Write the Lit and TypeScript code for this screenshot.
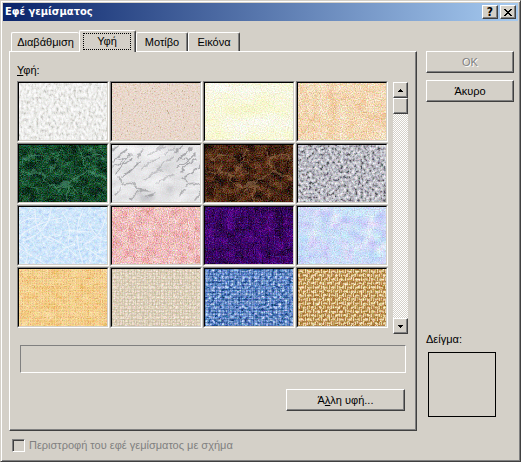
import { LitElement, html, svg, css, nothing } from "lit";
import { customElement, property, state } from "lit/decorators.js";
import { classMap } from "lit/directives/class-map.js";

interface Texture {
  name: string;
  ramp: string[];
  freq: string;
  octaves: number;
  contrast: number;
  chroma: number;
  grain?: number;
  marks?: "marble" | "veins" | "fibres" | "weave" | "specks" | "basket";
  mark?: string;
}

const TEXTURES: Texture[] = [
  { name: "Ανακυκλωμένο χαρτί", ramp: ["#c0c0bc", "#dededa", "#eeeeec", "#f8f8f8", "#ffffff"], freq: "0.4 0.28", octaves: 3, contrast: 1.5, chroma: 0.1, grain: 0.03 },
  { name: "Ροζ χαρτί", ramp: ["#cdb8a0", "#e8d2c2", "#e8d8cc", "#ecdcd2", "#e8e0d8"], freq: "0.6", octaves: 2, contrast: 1.6, chroma: 0.5, grain: 0.09, marks: "specks", mark: "#a09068" },
  { name: "Περγαμηνή", ramp: ["#f4f4c8", "#f8f8d2", "#f8f8dc", "#f8f8e6", "#fcfcf4"], freq: "0.04 0.06", octaves: 2, contrast: 1.5, chroma: 0.1, grain: 0.14 },
  { name: "Χαρτοσακούλα", ramp: ["#eec090", "#f0cca4", "#f4d8b4", "#f4dec0", "#fae8cc"], freq: "0.1", octaves: 3, contrast: 1.2, chroma: 0.05, grain: 0.22 },
  { name: "Πράσινο μάρμαρο", ramp: ["#062014", "#0a2e1c", "#144628", "#205c3a", "#408060"], freq: "0.1 0.12", octaves: 4, contrast: 1.4, chroma: 0.05, grain: 0.26, marks: "veins", mark: "#4f9874" },
  { name: "Λευκό μάρμαρο", ramp: ["#c8c8cc", "#dcdcde", "#e6e6e8", "#eeeef0", "#f8f8f8"], freq: "0.04 0.07", octaves: 3, contrast: 1.4, chroma: 0, grain: 0.05, marks: "marble", mark: "#77777b" },
  { name: "Καφέ μάρμαρο", ramp: ["#201008", "#30180c", "#4a2812", "#60361c", "#805438"], freq: "0.1 0.12", octaves: 4, contrast: 1.4, chroma: 0.05, grain: 0.26, marks: "veins", mark: "#9c7450" },
  { name: "Γρανίτης", ramp: ["#505058", "#9898a0", "#bcbcc6", "#d4d4da", "#f0f0f4"], freq: "0.35", octaves: 3, contrast: 1.8, chroma: 0.12, grain: 0.1 },
  { name: "Μπλε χαρτομάντιλο", ramp: ["#b4d0fa", "#c4e0fa", "#d0e6fc", "#d8ecfe", "#eaf4ff"], freq: "0.3", octaves: 3, contrast: 1.6, chroma: 0.4, grain: 0.09, marks: "fibres", mark: "#f4f8fc" },
  { name: "Ροζ χαρτομάντιλο", ramp: ["#e49c9c", "#eaacac", "#f0bcbc", "#f2c8c4", "#f6d8d0"], freq: "0.12", octaves: 3, contrast: 1.2, chroma: 0.1, grain: 0.26 },
  { name: "Μωβ πλέγμα", ramp: ["#200034", "#2e004c", "#3c0068", "#4c007c", "#680c98"], freq: "0.1", octaves: 3, contrast: 1.5, chroma: 0.1, grain: 0.28 },
  { name: "Μπουκέτο", ramp: ["#b8c8f8", "#c4d4fc", "#ccdcfc", "#d4e4fc", "#e4f0ff"], freq: "0.09", octaves: 4, contrast: 1.4, chroma: 1.1, grain: 0.16 },
  { name: "Πάπυρος", ramp: ["#e8b464", "#f0c078", "#f0c888", "#f4d094", "#f8dca4"], freq: "0.12", octaves: 3, contrast: 1.2, chroma: 0.2, grain: 0.18, marks: "weave", mark: "#ffe8a0" },
  { name: "Καμβάς", ramp: ["#ccc0a8", "#dcd0b8", "#e6d8c4", "#ecdece", "#f4e8d8"], freq: "0.5", octaves: 2, contrast: 1.8, chroma: 0.2, grain: 0.13, marks: "weave", mark: "#b4ab91" },
  { name: "Τζιν", ramp: ["#1c4480", "#4874b8", "#7498d4", "#98b4e4", "#cce0fc"], freq: "0.3 0.4", octaves: 2, contrast: 1.9, chroma: 0.15, grain: 0.2, marks: "weave", mark: "#184484" },
  { name: "Ψάθα", ramp: ["#a07034", "#b88c4c", "#d0ac70", "#e4c898", "#f8ecc8"], freq: "0.4", octaves: 2, contrast: 1.7, chroma: 0.15, grain: 0.2, marks: "basket", mark: "#94601c" },
];

const channel = (ramp: string[], at: number) =>
  ramp.map((c) => (parseInt(c.slice(at, at + 2), 16) / 255).toFixed(3)).join(" ");

@customElement("texture-swatch")
class TextureSwatch extends LitElement {
  static styles = css`
    :host { display: block; height: 57px; overflow: hidden; }
    .art { display: block; width: 100%; height: 100%; }
  `;

  @property({ attribute: false }) texture!: Texture;
  @property({ type: Number }) seed = 1;

  private marks(t: Texture) {
    const c = t.mark;
    switch (t.marks) {
      case "marble":
        return svg`<g fill="none" stroke=${c} stroke-linecap="round" filter="url(#soften)">
          <g id="streaks">
            <path d="M1 17 8 9 16 4M0 22Q9 19 19 9M4 28 11 19 20 14M9 32Q20 26 27 17M-2 7 6 1M7 14 12 13" stroke-width="1.6" opacity=".55"/>
            <path d="M36 10Q44 7 50 0M44 6 52 2M29 26 37 18 48 12M44 27 51 18 62 12M53 9 63 3M33 35 40 29 50 25M45 38 53 33 63 29" stroke-width="1.6" opacity=".32"/>
            <path d="M10 40Q19 36 24 41T37 46M6 33 12 37M19 55 25 47 32 45M34 51 42 49M31 5 26 12M3 50 8 45" stroke-width="1.6" opacity=".48"/>
          </g>
          <use href="#streaks" x="64"/>
        </g>`;
      case "veins":
        return svg`<g fill="none" stroke=${c} filter="url(#warp)">
          <path d="M31 27Q38 14 43 3M0 30Q20 22 27 34T48 38 68 28 88 34M58 0Q67 9 65 22M5 15Q14 8 24 12M66 13Q79 8 88 16M39 47Q50 32 58 47M47 57 51 36" stroke-width="1.6" opacity=".6"/>
          <path d="M0 44Q13 34 20 48M61 46Q72 34 88 40M25 9 34 22M10 0 14 14M75 1 77 14M64 22V57M40 26 62 40" opacity=".4"/>
        </g>`;
      case "fibres":
        return svg`<g fill="none" stroke=${c} stroke-width="1" opacity=".75">
          <path d="M32 0Q32 24 4 34M16 2Q14 26 34 35M0 29Q20 14 43 11M0 41 25 56M6 57Q13 43 0 36M25 29Q44 33 57 49M43 5Q54 18 49 36M64 3Q52 23 64 57M69 15Q78 34 88 34M87 9Q82 32 64 38M66 40 88 55M70 57Q74 44 88 42M35 56Q38 43 54 38M0 17Q9 9 22 12M46 23 70 25"/>
        </g>`;
      case "weave":
        return svg`<pattern id="weave" width="12" height="10" patternUnits="userSpaceOnUse">
            <path d="M0 .5H12M0 3.5H8M3 6.5H12M.5 0V10M4.5 0V6M7.5 2V10M10.5 0V7" fill="none" stroke=${c} opacity=".34"/>
          </pattern>
          <rect width="100%" height="100%" fill="url(#weave)"/>`;
      case "basket":
        return svg`<pattern id="weave" width="8" height="8" patternUnits="userSpaceOnUse">
            <path d="M0 .5H5M4 4.5H8M0 4.5H1M.5 1V4M4.5 5V8M6.5 0V4M2.5 5V8" fill="none" stroke=${c} opacity=".5"/>
            <path d="M1 2.5H5M5 6.5H8M7.5 0V4M1.5 5V8" fill="none" stroke="#fff3cc" opacity=".6"/>
          </pattern>
          <rect width="100%" height="100%" fill="url(#weave)"/>`;
      case "specks":
        return svg`<g fill=${c} opacity=".6">
          <path d="M55 27h1v2h1v2h-1v-2h-1zM21 16h1v1h-1zM34 28h1v1h-1zM17 40h1v1h-1zM46 43h1v1h-1zM59 10h1v1h-1zM70 7h1v1h-1zM71 34h1v1h-1zM72 44h1v1h-1zM10 25h1v1h-1zM9 51h1v1h-1zM40 5h1v1h-1zM29 50h1v1h-1zM80 22h1v1h-1z"/>
        </g>`;
      default:
        return nothing;
    }
  }

  render() {
    const t = this.texture;
    const k = t.contrast;
    const h = t.chroma;
    const off = (0.5 - 0.5 * (k + h)).toFixed(3);
    const matrix = `${k} ${h} 0 0 ${off} ${k} 0 ${h} 0 ${off} ${k} 0 0 ${h} ${off} 0 0 0 0 1`;
    const g = t.grain ?? 0;
    const grain = `${g} ${g * 2} 0 0 0 ${g} 0 ${g * 2} 0 0 ${g * 3} 0 0 0 0 0 0 0 0 1`;
    return html`<svg class="art" aria-hidden="true">
      <filter id="noise" x="0" y="0" width="100%" height="100%" color-interpolation-filters="sRGB">
        <feTurbulence type="fractalNoise" baseFrequency=${t.freq} numOctaves=${t.octaves} seed=${this.seed} />
        <feColorMatrix values=${matrix} />
        <feComponentTransfer result="base">
          <feFuncR type="table" tableValues=${channel(t.ramp, 1)} />
          <feFuncG type="table" tableValues=${channel(t.ramp, 3)} />
          <feFuncB type="table" tableValues=${channel(t.ramp, 5)} />
        </feComponentTransfer>
        <feTurbulence type="fractalNoise" baseFrequency="0.85" numOctaves="2" seed=${this.seed + 20} />
        <feColorMatrix values=${grain} result="grain" />
        <feComposite in="base" in2="grain" operator="arithmetic" k2="1" k3="1" k4=${(-1.5 * g).toFixed(3)} />
        <feColorMatrix values="1 0 0 0 0 0 1 0 0 0 0 0 1 0 0 0 0 0 0 1" />
      </filter>
      <filter id="warp" x="-10%" y="-10%" width="120%" height="120%">
        <feTurbulence type="fractalNoise" baseFrequency="0.15" numOctaves="3" seed="4" />
        <feDisplacementMap in="SourceGraphic" scale="9" xChannelSelector="R" yChannelSelector="G" />
      </filter>
      <filter id="soften" x="-10%" y="-10%" width="120%" height="120%">
        <feTurbulence type="fractalNoise" baseFrequency="0.2" numOctaves="2" seed="4" />
        <feDisplacementMap in="SourceGraphic" scale="5" xChannelSelector="R" yChannelSelector="G" />
        <feGaussianBlur stdDeviation="0.7" />
      </filter>
      <rect width="100%" height="100%" filter="url(#noise)" />
      ${this.marks(t)}
    </svg>`;
  }
}

@customElement("app-root")
class AppRoot extends LitElement {
  static styles = css`
    :host {
      display: block;
      font: 11px/14px "Liberation Sans", Arial, sans-serif;
      color: #000;
      --face: #d4d0c8;
      --dark: #404040;
      --shade: #808080;
    }
    * { box-sizing: border-box; }
    button { font: inherit; color: inherit; margin: 0; padding: 0; border-radius: 0; }
    .raised {
      display: flex;
      align-items: center;
      justify-content: center;
      background: var(--face);
      border: 1px solid;
      border-color: #fff var(--dark) var(--dark) #fff;
      box-shadow: inset -1px -1px var(--shade);
    }
    .dialog {
      background: var(--face);
      border: 1px solid;
      border-color: var(--face) var(--dark) var(--dark) var(--face);
      box-shadow: inset 1px 1px #fff, inset -1px -1px var(--shade);
      padding: 2px;
    }
    .title {
      display: flex;
      align-items: center;
      gap: 2px;
      height: 18px;
      padding: 0 2px;
      background: linear-gradient(90deg, #0a246a, #a6caf0);
      color: #fff;
      font-family: "DejaVu Sans Condensed", sans-serif;
    }
    .title h1 { flex: 1; margin: 0; font: inherit; font-weight: bold; }
    .caption { width: 16px; height: 14px; color: #000; font-weight: bold; font-size: 12px; }
    .content { display: flex; gap: 9px; padding: 9px 4px 0 6px; }
    .main { flex: 1; min-width: 0; }
    .tabs { display: flex; align-items: flex-end; height: 21px; padding-left: 2px; }
    .tab {
      height: 19px;
      width: 52px;
      background: var(--face);
      border: 1px solid;
      border-color: #fff var(--dark) transparent #fff;
      border-bottom: 0;
      border-radius: 2px 2px 0 0;
      box-shadow: inset -1px 0 var(--shade);
    }
    .tab.wide { width: 68px; border-right: 0; box-shadow: none; }
    .tab.active {
      position: relative;
      width: 57px;
      height: 22px;
      margin-bottom: -1px;
      padding: 2px 4px 2px 3px;
    }
    .focus { display: block; border: 1px dotted #000; height: 17px; line-height: 15px; }
    .panel {
      border: 1px solid;
      border-color: #fff var(--dark) var(--dark) #fff;
      box-shadow: inset -1px -1px var(--shade);
      padding: 11px 8px 19px 7px;
    }
    .label { display: block; margin-bottom: 4px; }
    .browser { display: flex; gap: 5px; }
    .grid { flex: 1; display: grid; grid-template-columns: repeat(4, 1fr); gap: 1px; align-content: start; }
    .cell {
      display: block;
      background: none;
      border: 1px solid;
      border-color: var(--shade) #fff #fff var(--shade);
    }
    .well { display: block; border: 1px solid; border-color: #000 var(--face) var(--face) #000; }
    .scroll {
      display: flex;
      flex-direction: column;
      width: 15px;
      height: 252px;
      margin-top: 1px;
      background: repeating-conic-gradient(#fff 0 25%, var(--face) 0 50%) 0 0 / 2px 2px;
    }
    .arrow { height: 16px; }
    .thumb { height: 16px; }
    .down { margin-top: auto; }
    .name {
      display: block;
      height: 28px;
      margin: 11px 2px 16px 3px;
      border: 1px solid;
      border-color: var(--shade) #fff #fff var(--shade);
    }
    .push { width: 100%; height: 22px; }
    .push:disabled { color: var(--shade); text-shadow: 1px 1px #fff; }
    .push.other { width: 119px; margin: 0 3px 0 auto; }
    .side { display: flex; flex-direction: column; gap: 7px; width: 88px; padding: 21px 0 14px; }
    .sample { margin-top: auto; }
    .sample h2 { margin: 0 0 6px; font: inherit; }
    .preview { width: 68px; height: 65px; margin-left: 2px; border: 1px solid #000; }
    .rotate { display: flex; align-items: center; gap: 4px; padding: 7px 9px; color: var(--shade); }
    .rotate input {
      appearance: none;
      width: 13px;
      height: 13px;
      margin: 0;
      border: 1px solid;
      border-color: var(--shade) #fff #fff var(--shade);
      box-shadow: inset 1px 1px var(--dark);
    }
  `;

  @state() private tab = 1;

  private tabs = ["Διαβάθμιση", "Υφή", "Μοτίβο", "Εικόνα"];

  render() {
    return html`<main class="dialog">
      <header class="title">
        <h1>Εφέ γεμίσματος</h1>
        <button class="caption raised" aria-label="Βοήθεια">?</button>
        <button class="caption raised" aria-label="Κλείσιμο">
          <svg width="8" height="7" shape-rendering="crispEdges" aria-hidden="true">
            <path d="M0 0h2v1h1v1h2V1h1V0h2v1H7v1H6v1H5v1h1v1h1v1h1v1H6V6H5V5H3v1H2v1H0V6h1V5h1V4h1V3H2V2H1V1H0z" />
          </svg>
        </button>
      </header>
      <div class="content">
        <section class="main">
          <div class="tabs" role="tablist">
            ${this.tabs.map((name, i) => html`<button
              role="tab"
              aria-selected=${i === this.tab}
              class=${classMap({ tab: true, active: i === this.tab, wide: i === 0 })}
              @click=${() => (this.tab = i)}
            >${i === this.tab ? html`<span class="focus">${name}</span>` : name}</button>`)}
          </div>
          <div class="panel" role="tabpanel">
            <span class="label"><u>Υ</u>φή:</span>
            <div class="browser">
              <div class="grid">
                ${TEXTURES.map((t, i) => html`<button class="cell" aria-label=${t.name}>
                  <span class="well"><texture-swatch .texture=${t} .seed=${i + 3}></texture-swatch></span>
                </button>`)}
              </div>
              <div class="scroll">
                <button class="arrow raised" aria-label="Επάνω">
                  <svg width="5" height="3" shape-rendering="crispEdges" aria-hidden="true"><path d="M2 0h1v1h1v1h1v1H0V2h1V1h1z" /></svg>
                </button>
                <div class="thumb raised"></div>
                <button class="arrow down raised" aria-label="Κάτω">
                  <svg width="5" height="3" shape-rendering="crispEdges" aria-hidden="true"><path d="M0 0h5v1H4v1H3v1H2V2H1V1H0z" /></svg>
                </button>
              </div>
            </div>
            <output class="name"></output>
            <button class="push other raised"><span>Ά<u>λ</u>λη υφή...</span></button>
          </div>
        </section>
        <aside class="side">
          <button class="push raised" disabled>OK</button>
          <button class="push raised">Άκυρο</button>
          <div class="sample">
            <h2>Δείγμα:</h2>
            <div class="preview"></div>
          </div>
        </aside>
      </div>
      <label class="rotate"><input type="checkbox" disabled />Περιστροφή του εφέ γεμίσματος με σχήμα</label>
    </main>`;
  }
}
